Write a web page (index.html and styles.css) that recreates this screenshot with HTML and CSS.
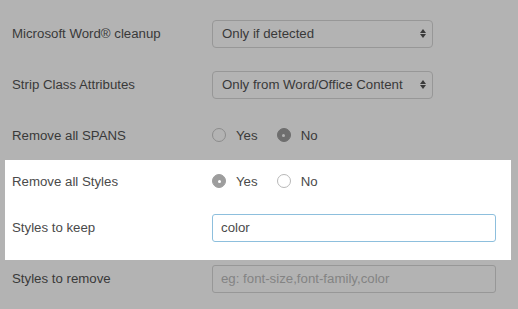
FILE: index.html
```html
<!DOCTYPE html>
<html lang="en">
<head>
    <meta charset="UTF-8">
    <meta name="viewport" content="width=device-width, initial-scale=1.0">
    <title>Cleanup settings</title>
    <link rel="stylesheet" href="styles.css">
</head>
<body>
    <div class="settings">
        <div class="row">
            <div class="label">Microsoft Word® cleanup</div>
            <div class="select">
                <span>Only if detected</span>
                <span class="arrows"><i class="up"></i><i class="down"></i></span>
            </div>
        </div>
        <div class="row">
            <div class="label">Strip Class Attributes</div>
            <div class="select">
                <span>Only from Word/Office Content</span>
                <span class="arrows"><i class="up"></i><i class="down"></i></span>
            </div>
        </div>
        <div class="row row-radio">
            <div class="label">Remove all SPANS</div>
            <div class="radios">
                <span class="radio"></span><span class="option">Yes</span>
                <span class="radio checked"></span><span class="option">No</span>
            </div>
        </div>

        <div class="highlight">
            <div class="row row-first">
                <div class="label">Remove all Styles</div>
                <div class="radios">
                    <span class="radio checked"></span><span class="option">Yes</span>
                    <span class="radio"></span><span class="option">No</span>
                </div>
            </div>
            <div class="row">
                <div class="label">Styles to keep</div>
                <div class="input focused">color</div>
            </div>
        </div>

        <div class="row row-last">
            <div class="label">Styles to remove</div>
            <div class="input placeholder">eg: font-size,font-family,color</div>
        </div>
    </div>
</body>
</html>
```

FILE: styles.css
```css
html, body {
    margin: 0;
    height: 100%;
    overflow: hidden;
}

body {
    background-color: #b3b3b3;
    font-family: "Liberation Sans", Arial, sans-serif;
    font-size: 13.25px;
    color: #393939;
}

.settings {
    padding-top: 8px;
}

.row {
    display: flex;
    align-items: center;
    height: 51px;
    padding-left: 12px;
}

.row-radio {
    height: 50px;
}

.label {
    width: 200px;
    flex-shrink: 0;
}

/* selects */
.select {
    box-sizing: border-box;
    width: 221px;
    height: 28px;
    border: 1px solid #979797;
    border-radius: 4px;
    display: flex;
    align-items: center;
    justify-content: space-between;
    padding: 0 6px 0 9px;
    color: #393939;
}

.arrows {
    display: flex;
    flex-direction: column;
    gap: 1px;
}

.arrows i {
    width: 0;
    height: 0;
    border-left: 3px solid transparent;
    border-right: 3px solid transparent;
}

.arrows .up {
    border-bottom: 4px solid #3a3a3a;
}

.arrows .down {
    border-top: 4px solid #3a3a3a;
}

/* radios */
.radios {
    display: flex;
    align-items: center;
}

.radio {
    box-sizing: border-box;
    width: 14px;
    height: 14px;
    border-radius: 50%;
    border: 1px solid #8c8c8c;
    position: relative;
    margin-right: 10px;
}

.radio.checked {
    background-color: #6e6e6e;
    border-color: #6e6e6e;
}

.radio.checked::after {
    content: "";
    position: absolute;
    left: 4.5px;
    top: 4.5px;
    width: 3px;
    height: 3px;
    border-radius: 50%;
    background-color: #b3b3b3;
}

.option {
    margin-right: 19px;
}

/* text inputs */
.input {
    box-sizing: border-box;
    width: 284px;
    height: 28px;
    border: 1px solid #979797;
    border-radius: 3px;
    display: flex;
    align-items: center;
    padding-left: 8px;
}

.input.placeholder {
    color: #838383;
}

/* highlighted block */
.highlight {
    background-color: #fff;
    margin: 0 7px 0 5px;
    padding-bottom: 7px;
    color: #4a4a4a;
}

.highlight .row {
    padding-left: 7px;
}

.highlight .row-first {
    height: 42px;
}

.highlight .radio {
    border-color: #b8b8b8;
}

.highlight .radio.checked {
    background-color: #9d9d9d;
    border-color: #9d9d9d;
}

.highlight .radio.checked::after {
    background-color: #fff;
}

.highlight .input.focused {
    border-color: #8dbfdd;
    color: #4a4a4a;
}

.row-last {
    height: 37px;
}
```
